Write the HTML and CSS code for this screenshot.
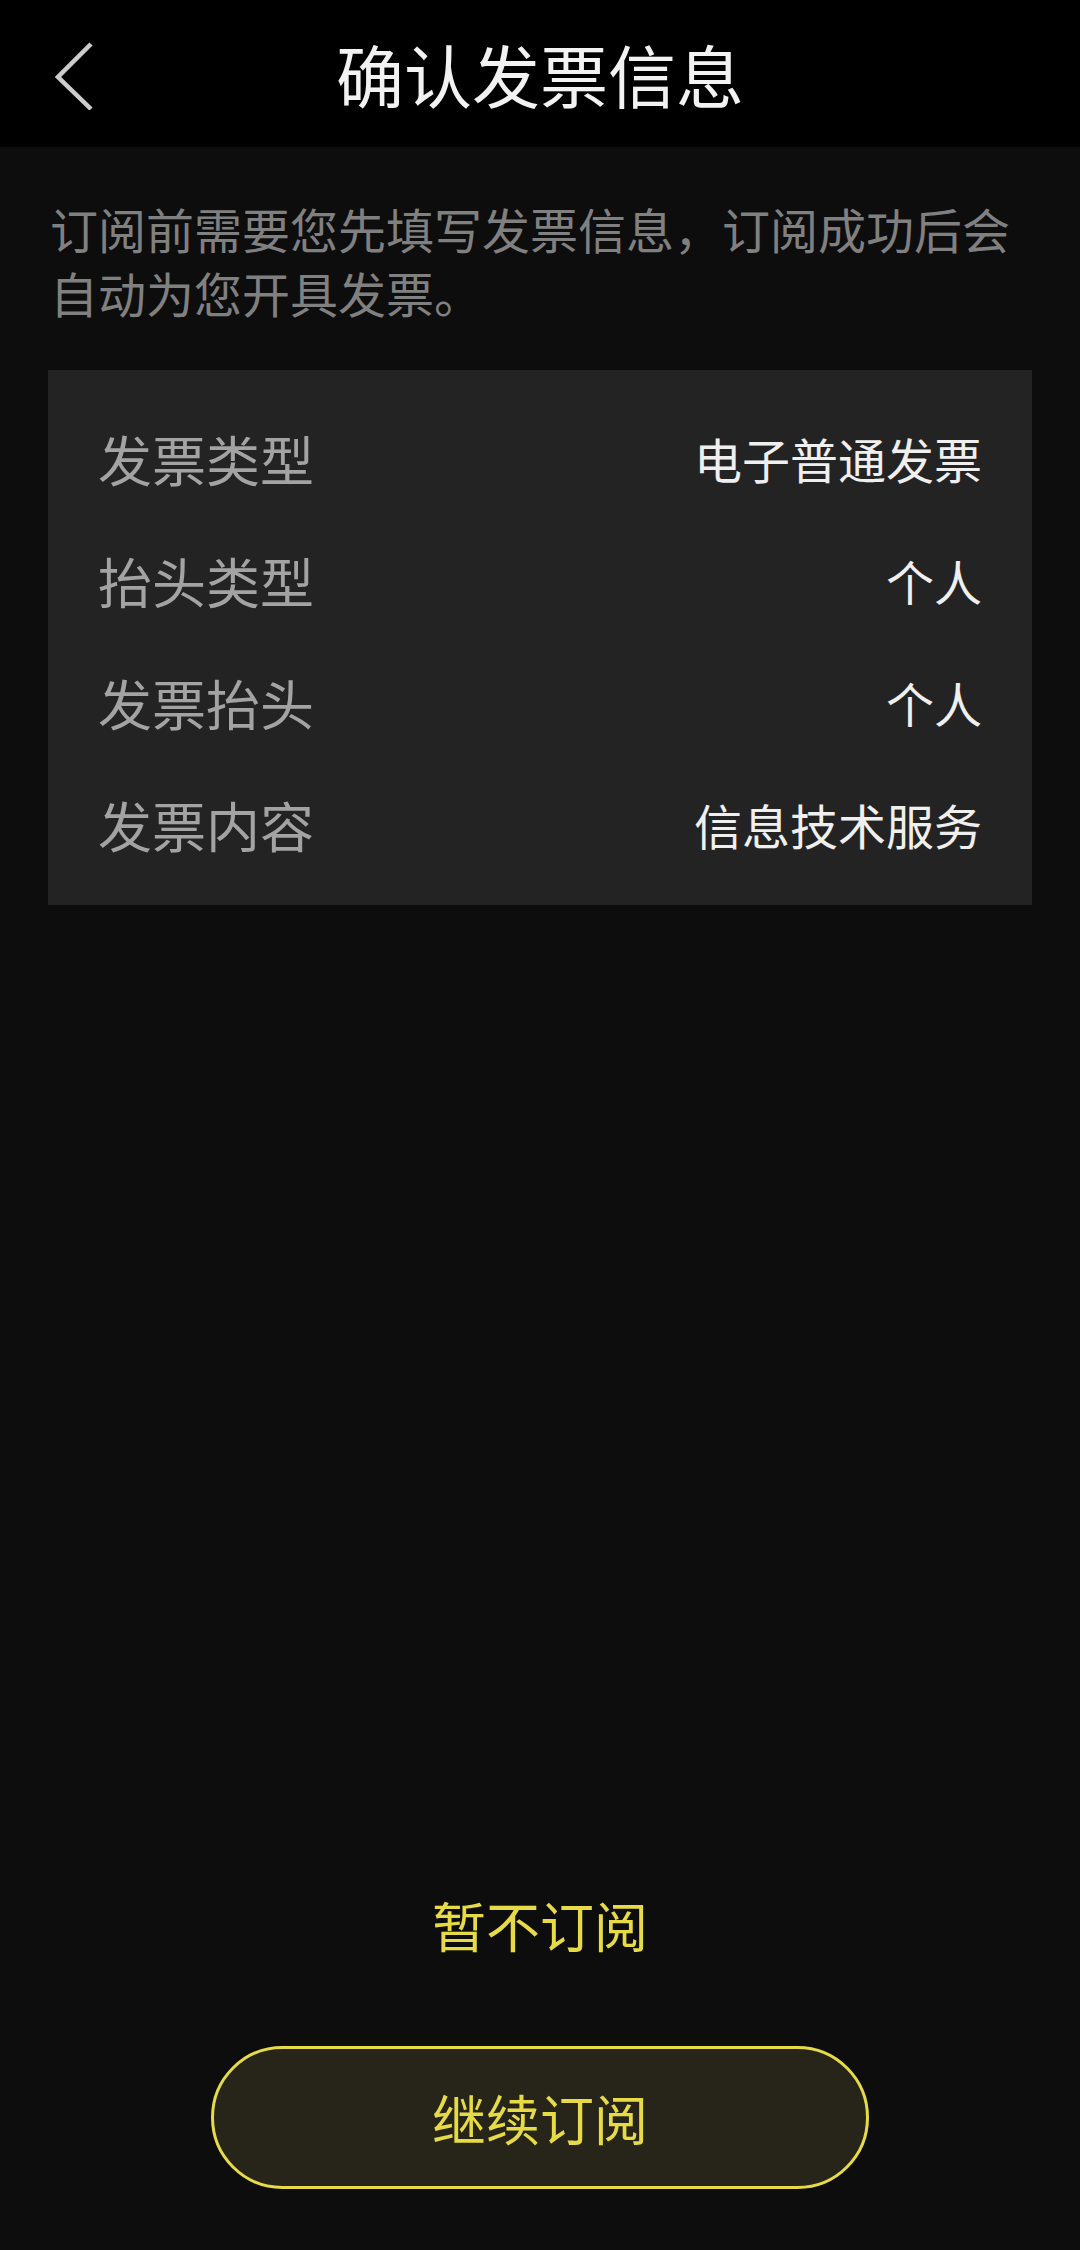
FILE: index.html
```html
<!DOCTYPE html>
<html lang="zh-CN">
<head>
<meta charset="utf-8">
<title>确认发票信息</title>
<link rel="stylesheet" href="styles.css">
</head>
<body>
<div class="page">
  <header class="topbar">
    <span class="back" aria-label="返回">
      <svg width="60" height="80" viewBox="0 0 60 80"><path d="M36 14 L3 47 L36 79" fill="none" stroke="#cccccc" stroke-width="4.5" stroke-linecap="butt" stroke-linejoin="miter"/></svg>
    </span>
    <h1 class="title">确认发票信息</h1>
  </header>
  <main class="content">
    <p class="desc">订阅前需要您先填写发票信息，订阅成功后会自动为您开具发票。</p>
    <section class="card">
      <div class="row"><span class="label">发票类型</span><span class="value">电子普通发票</span></div>
      <div class="row"><span class="label">抬头类型</span><span class="value">个人</span></div>
      <div class="row"><span class="label">发票抬头</span><span class="value">个人</span></div>
      <div class="row"><span class="label">发票内容</span><span class="value">信息技术服务</span></div>
    </section>
  </main>
  <footer class="actions">
    <div class="skip">暂不订阅</div>
    <div class="btn">继续订阅</div>
  </footer>
</div>
</body>
</html>
```
FILE: styles.css
```css
html, body {
  margin: 0;
  padding: 0;
  background: #0d0d0d;
}
body {
  font-family: "Noto Sans CJK SC", "Noto Sans", sans-serif;
}
.page {
  width: 1080px;
  min-height: 2250px;
  display: flex;
  flex-direction: column;
  background: #0d0d0d;
}
.topbar {
  position: relative;
  height: 147px;
  background: #000000;
  display: flex;
  align-items: center;
  justify-content: center;
}
.back {
  position: absolute;
  left: 55px;
  top: 30px;
  width: 60px;
  height: 80px;
}
.back svg { display: block; }
.title {
  margin: 0;
  font-size: 68px;
  font-weight: 400;
  color: #f2f2f2;
  line-height: 1;
  letter-spacing: 0;
}
.content {
  flex: 1;
  padding: 49px 48px 0;
}
.desc {
  margin: 0;
  font-size: 48px;
  line-height: 64px;
  color: #808080;
  padding-left: 2px;
}
.card {
  margin-top: 46px;
  background: #232323;
  padding: 27px 50px 20px;
}
.row {
  height: 122px;
  display: flex;
  align-items: center;
  justify-content: space-between;
}
.label {
  font-size: 54px;
  color: #a3a3a3;
}
.value {
  font-size: 48px;
  color: #efefef;
}
.actions {
  display: flex;
  flex-direction: column;
  align-items: center;
  padding-bottom: 61px;
}
.skip {
  height: 100px;
  line-height: 100px;
  font-size: 54px;
  color: #e6da47;
  margin-bottom: 71px;
}
.btn {
  box-sizing: border-box;
  width: 658px;
  height: 143px;
  border: 3px solid #e6da47;
  border-radius: 72px;
  background: #27251a;
  color: #e6da47;
  font-size: 54px;
  display: flex;
  align-items: center;
  justify-content: center;
}
```
